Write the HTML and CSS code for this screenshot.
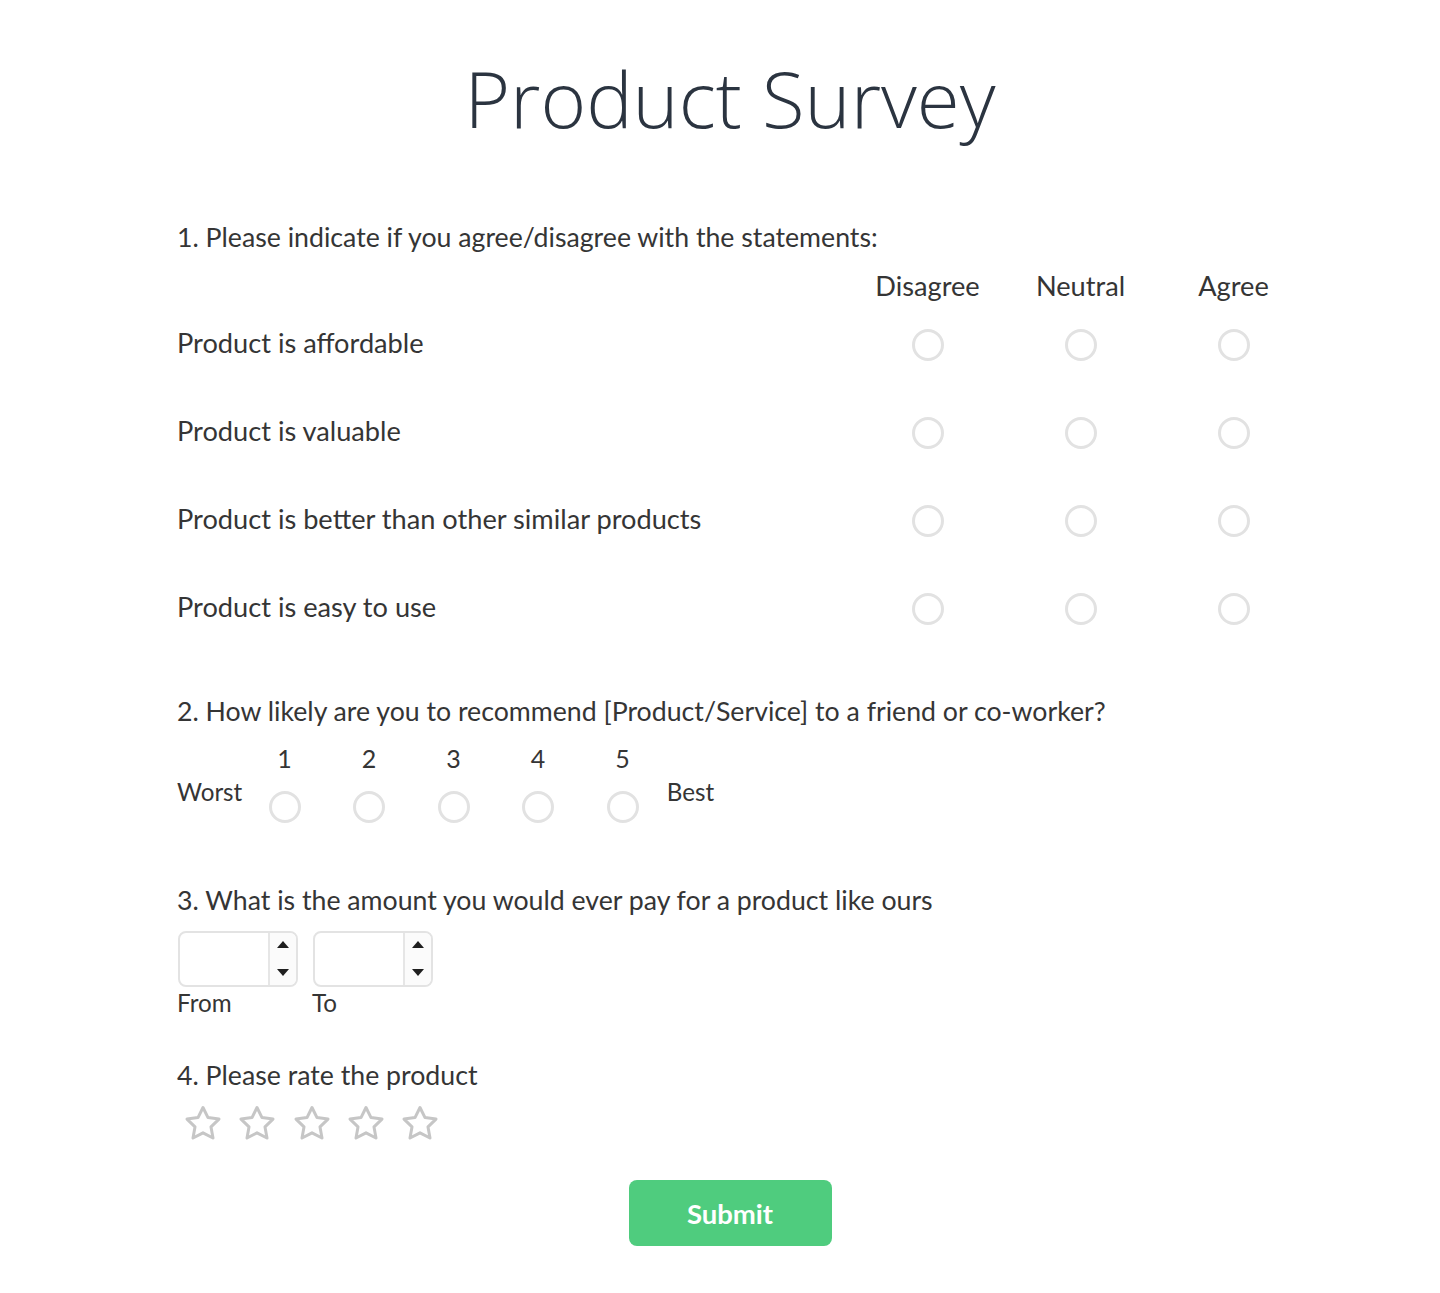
FILE: index.html
```html
<!DOCTYPE html>
<html lang="en">
<head>
<meta charset="utf-8">
<title>Product Survey</title>
<link rel="stylesheet" href="styles.css">
</head>
<body>
<main class="survey">
  <h1 class="title">Product Survey</h1>

  <section class="q q1">
    <p class="q-title">1. Please indicate if you agree/disagree with the statements:</p>
    <div class="matrix">
      <div class="m-head"></div>
      <div class="m-head">Disagree</div>
      <div class="m-head">Neutral</div>
      <div class="m-head">Agree</div>

      <div class="m-label">Product is affordable</div>
      <div class="m-cell"><span class="radio"></span></div>
      <div class="m-cell"><span class="radio"></span></div>
      <div class="m-cell"><span class="radio"></span></div>

      <div class="m-label">Product is valuable</div>
      <div class="m-cell"><span class="radio"></span></div>
      <div class="m-cell"><span class="radio"></span></div>
      <div class="m-cell"><span class="radio"></span></div>

      <div class="m-label">Product is better than other similar products</div>
      <div class="m-cell"><span class="radio"></span></div>
      <div class="m-cell"><span class="radio"></span></div>
      <div class="m-cell"><span class="radio"></span></div>

      <div class="m-label">Product is easy to use</div>
      <div class="m-cell"><span class="radio"></span></div>
      <div class="m-cell"><span class="radio"></span></div>
      <div class="m-cell"><span class="radio"></span></div>
    </div>
  </section>

  <section class="q q2">
    <p class="q-title">2. How likely are you to recommend [Product/Service] to a friend or co-worker?</p>
    <div class="scale">
      <span class="scale-end">Worst</span>
      <div class="scale-col"><span class="scale-num">1</span><span class="radio"></span></div>
      <div class="scale-col"><span class="scale-num">2</span><span class="radio"></span></div>
      <div class="scale-col"><span class="scale-num">3</span><span class="radio"></span></div>
      <div class="scale-col"><span class="scale-num">4</span><span class="radio"></span></div>
      <div class="scale-col"><span class="scale-num">5</span><span class="radio"></span></div>
      <span class="scale-end best">Best</span>
    </div>
  </section>

  <section class="q q3">
    <p class="q-title">3. What is the amount you would ever pay for a product like ours</p>
    <div class="range">
      <div class="range-field">
        <div class="num">
          <span class="num-value"></span>
          <span class="num-spin"><span class="tri up"></span><span class="tri down"></span></span>
        </div>
        <span class="range-label">From</span>
      </div>
      <div class="range-field">
        <div class="num">
          <span class="num-value"></span>
          <span class="num-spin"><span class="tri up"></span><span class="tri down"></span></span>
        </div>
        <span class="range-label">To</span>
      </div>
    </div>
  </section>

  <section class="q q4">
    <p class="q-title">4. Please rate the product</p>
    <div class="stars">
      <svg class="star" viewBox="0 0 40 40"><path d="M20 3.5 L25 13.6 L36 15.1 L28 22.9 L30 34 L20 28.8 L10 34 L12 22.9 L4 15.1 L15 13.6 Z"/></svg>
      <svg class="star" viewBox="0 0 40 40"><path d="M20 3.5 L25 13.6 L36 15.1 L28 22.9 L30 34 L20 28.8 L10 34 L12 22.9 L4 15.1 L15 13.6 Z"/></svg>
      <svg class="star" viewBox="0 0 40 40"><path d="M20 3.5 L25 13.6 L36 15.1 L28 22.9 L30 34 L20 28.8 L10 34 L12 22.9 L4 15.1 L15 13.6 Z"/></svg>
      <svg class="star" viewBox="0 0 40 40"><path d="M20 3.5 L25 13.6 L36 15.1 L28 22.9 L30 34 L20 28.8 L10 34 L12 22.9 L4 15.1 L15 13.6 Z"/></svg>
      <svg class="star" viewBox="0 0 40 40"><path d="M20 3.5 L25 13.6 L36 15.1 L28 22.9 L30 34 L20 28.8 L10 34 L12 22.9 L4 15.1 L15 13.6 Z"/></svg>
    </div>
  </section>

  <div class="actions">
    <button class="submit" type="button">Submit</button>
  </div>
</main>
</body>
</html>
```

FILE: styles.css
```css
html, body {
  margin: 0;
  padding: 0;
  background: #ffffff;
}

body {
  font-family: Lato, "Open Sans", sans-serif;
  color: #353535;
}

.survey {
  width: 1106px;
  margin-left: 177px;
  padding-top: 59px;
}

.title {
  margin: 0;
  font-family: "Open Sans", sans-serif;
  font-weight: 300;
  font-size: 78px;
  line-height: 78px;
  color: #2b3440;
  text-align: center;
}

.q-title {
  margin: 0;
  font-size: 26.7px;
  line-height: 32px;
}

.q1 {
  margin-top: 84px;
}

.matrix {
  display: grid;
  grid-template-columns: 1fr 153px 153px 153px;
  width: 1133px;
  margin-top: 18px;
}

.m-head {
  height: 30px;
  font-size: 27.2px;
  line-height: 30px;
  text-align: center;
}

.m-label {
  height: 88px;
  display: flex;
  align-items: center;
  font-size: 27.2px;
  padding-bottom: 6px;
  box-sizing: border-box;
}

.m-cell {
  height: 88px;
  display: flex;
  align-items: center;
  justify-content: center;
}

.radio {
  display: block;
  width: 32px;
  height: 32px;
  box-sizing: border-box;
  border: 3px solid #e2e2e2;
  border-radius: 50%;
  background: #fff;
}

.q2 {
  margin-top: 42px;
}

.scale {
  display: flex;
  align-items: flex-end;
  margin-top: 17px;
}

.scale-end {
  font-size: 24.2px;
  line-height: 26px;
  margin-bottom: 18px;
}

.scale-end.best {
  margin-left: 2px;
}

.scale-col {
  width: 84.5px;
  display: flex;
  flex-direction: column;
  align-items: center;
  gap: 18px;
}

.scale-num {
  font-size: 25px;
  line-height: 29px;
}

.q3 {
  margin-top: 61px;
}

.range {
  display: flex;
  gap: 15px;
  margin-top: 15px;
  margin-left: 1px;
}

.range-field {
  display: flex;
  flex-direction: column;
  gap: 3px;
}

.num {
  width: 120px;
  height: 56px;
  box-sizing: border-box;
  border: 2px solid #e3e3e3;
  border-radius: 8px;
  display: flex;
  overflow: hidden;
}

.num-value {
  flex: 1;
}

.num-spin {
  width: 26px;
  border-left: 2px solid #e6e6e6;
  background: #fbfbfb;
  display: flex;
  flex-direction: column;
  justify-content: space-between;
  align-items: center;
  padding: 8px 0 9px;
}

.tri {
  width: 0;
  height: 0;
  border-left: 6px solid transparent;
  border-right: 6px solid transparent;
}

.tri.up {
  border-bottom: 7px solid #1f1f1f;
}

.tri.down {
  border-top: 7px solid #1f1f1f;
}

.range-label {
  font-size: 24.2px;
  line-height: 26px;
  margin-left: -1px;
}

.q4 {
  margin-top: 43px;
}

.stars {
  display: flex;
  gap: 14.3px;
  margin-top: 13px;
  margin-left: 6px;
}

.star {
  width: 40px;
  height: 40px;
  display: block;
}

.star path {
  fill: none;
  stroke: #c6c6c6;
  stroke-width: 3;
  stroke-linejoin: round;
}

.actions {
  display: flex;
  justify-content: center;
  margin-top: 36px;
}

.submit {
  width: 203px;
  height: 66px;
  border: none;
  border-radius: 8px;
  background: #4fcc7e;
  color: #ffffff;
  font-family: Lato, sans-serif;
  font-weight: 700;
  font-size: 27.5px;
  cursor: pointer;
}
```
